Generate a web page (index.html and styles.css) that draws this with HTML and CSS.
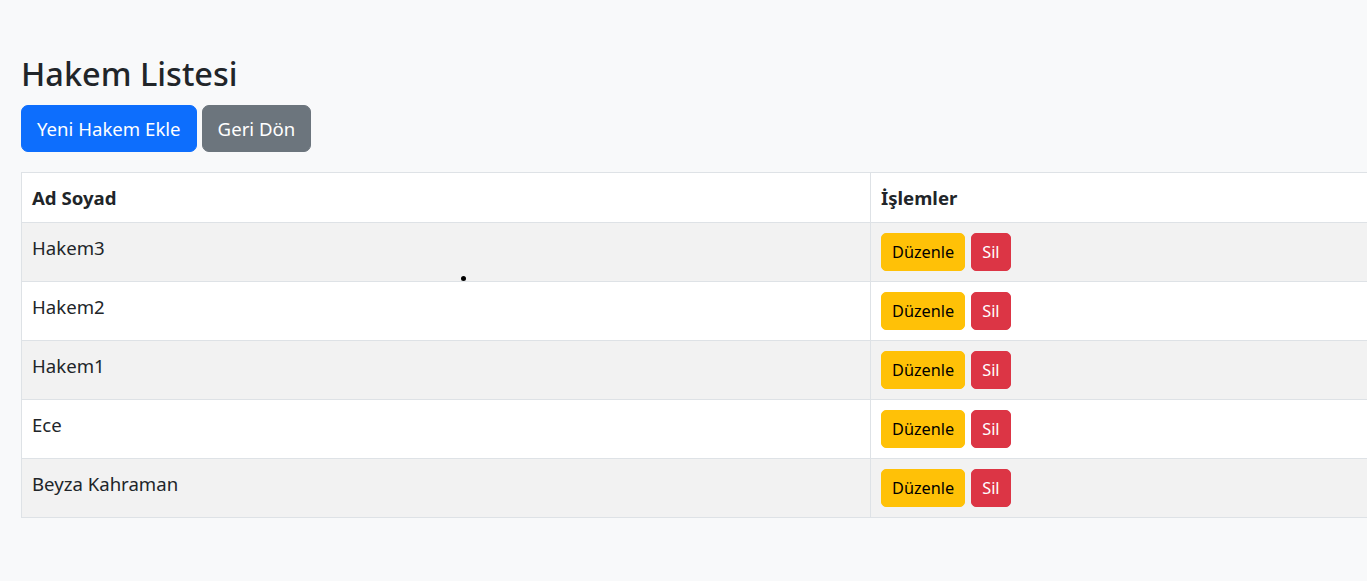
FILE: index.html
```html
<!DOCTYPE html>
<html lang="tr">
<head>
<meta charset="utf-8">
<title>Hakem Listesi</title>
<link rel="stylesheet" href="styles.css">
</head>
<body>
<div class="page">
  <h2 class="title">Hakem Listesi</h2>
  <div class="actions">
    <a class="btn btn-primary">Yeni Hakem Ekle</a>
    <a class="btn btn-secondary">Geri Dön</a>
  </div>
  <table class="table">
    <thead>
      <tr><th class="col-name">Ad Soyad</th><th>İşlemler</th></tr>
    </thead>
    <tbody>
      <tr class="odd"><td>Hakem3</td><td><div class="ops"><a class="btn-sm btn-warning">Düzenle</a><a class="btn-sm btn-danger">Sil</a></div></td></tr>
      <tr><td>Hakem2</td><td><div class="ops"><a class="btn-sm btn-warning">Düzenle</a><a class="btn-sm btn-danger">Sil</a></div></td></tr>
      <tr class="odd"><td>Hakem1</td><td><div class="ops"><a class="btn-sm btn-warning">Düzenle</a><a class="btn-sm btn-danger">Sil</a></div></td></tr>
      <tr><td>Ece</td><td><div class="ops"><a class="btn-sm btn-warning">Düzenle</a><a class="btn-sm btn-danger">Sil</a></div></td></tr>
      <tr class="odd"><td>Beyza Kahraman</td><td><div class="ops"><a class="btn-sm btn-warning">Düzenle</a><a class="btn-sm btn-danger">Sil</a></div></td></tr>
    </tbody>
  </table>
</div>
<div class="cursor-dot"></div>
</body>
</html>
```

FILE: styles.css
```css
html, body {
  margin: 0;
  padding: 0;
}
body {
  background: #f8f9fa;
  color: #212529;
  font-family: "Noto Sans", "Open Sans", sans-serif;
  font-size: 18.6px;
  line-height: 30px;
  overflow: hidden;
  width: 1367px;
  height: 581px;
  position: relative;
}
.page {
  padding: 53px 0 0 21px;
}
.title {
  font-size: 32.5px;
  font-weight: 500;
  line-height: 42px;
  margin: 0 0 10px 0;
}
.actions {
  display: flex;
  gap: 5px;
  margin-bottom: 20px;
}
.btn {
  display: inline-block;
  padding: 7.5px 15px;
  font-size: 18.6px;
  line-height: 30px;
  border: 1px solid transparent;
  border-radius: 7px;
  color: #fff;
}
.btn-primary { background: #0d6efd; border-color: #0d6efd; }
.btn-secondary { background: #6c757d; border-color: #6c757d; }
.table {
  width: 1420px;
  border-collapse: collapse;
  background: #fff;
}
.table th, .table td {
  border: 1px solid #dee2e6;
  padding: 10px;
  text-align: left;
  vertical-align: top;
}
.table th {
  font-weight: 700;
  line-height: 29px;
}
.col-name {
  width: 828px;
}
.table tr.odd td {
  background: #f2f2f2;
}
.ops {
  display: flex;
  gap: 6px;
}
.btn-sm {
  display: inline-block;
  padding: 5px 10px;
  font-size: 16.3px;
  line-height: 26px;
  border: 1px solid transparent;
  border-radius: 5px;
}
.btn-warning { background: #ffc107; border-color: #ffc107; color: #000; }
.btn-danger { background: #dc3545; border-color: #dc3545; color: #fff; }
.cursor-dot {
  position: absolute;
  left: 461px;
  top: 276px;
  width: 5px;
  height: 5px;
  border-radius: 50%;
  background: #000;
}
```
